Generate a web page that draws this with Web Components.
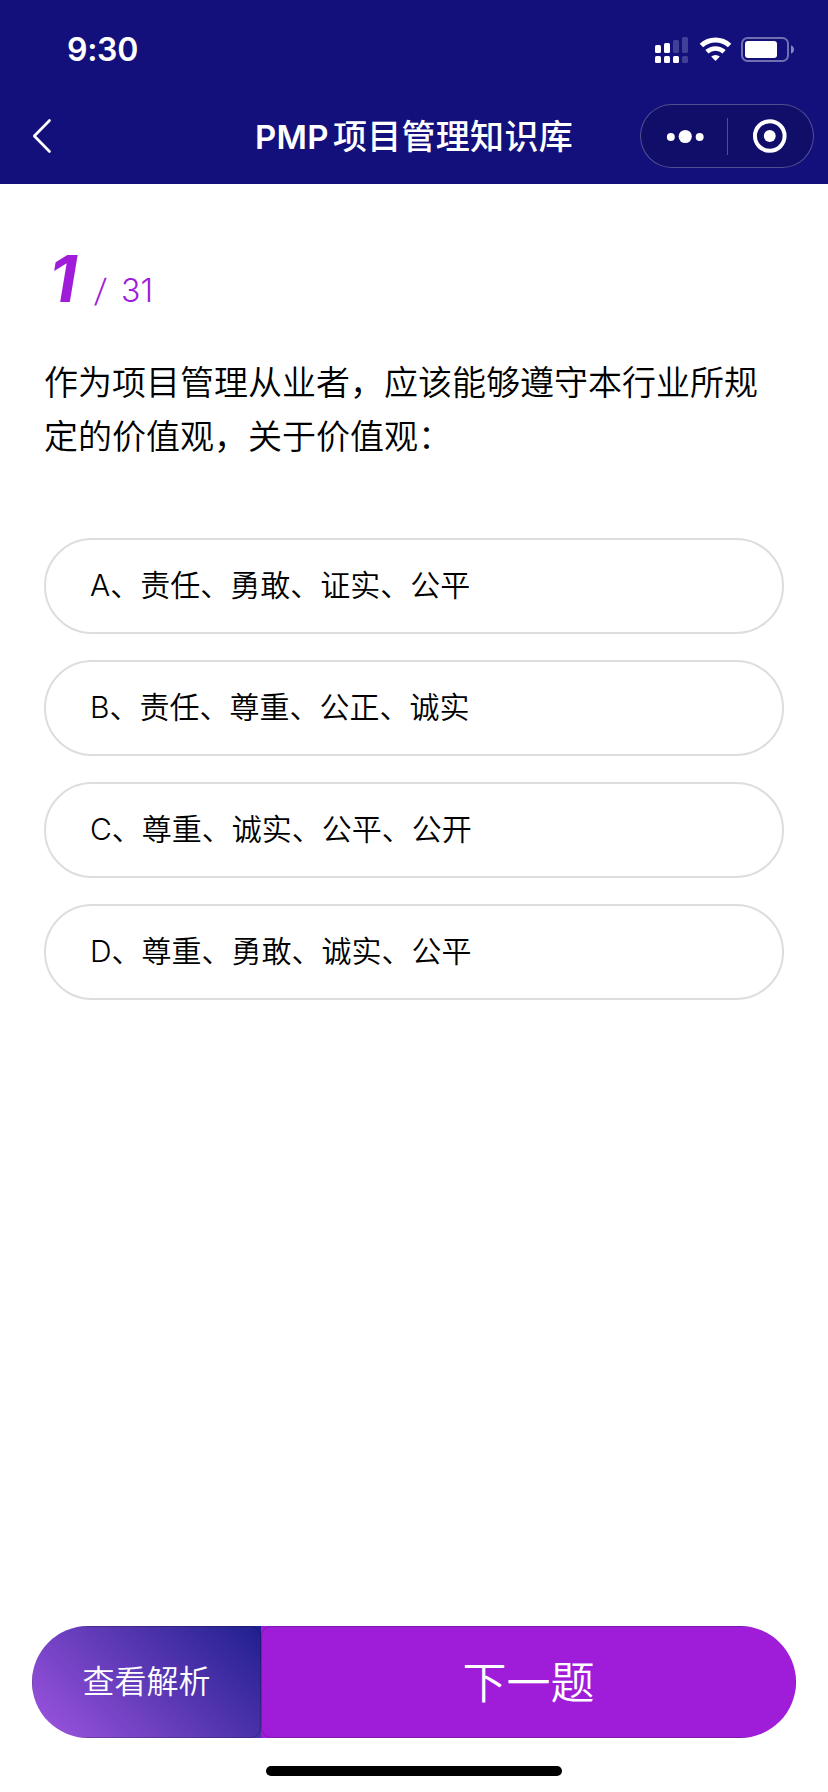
<!DOCTYPE html>
<html lang="zh-CN">
<head>
<meta charset="utf-8">
<meta name="viewport" content="width=device-width, initial-scale=1">
<title>PMP项目管理知识库</title>
<style>
  html, body { margin: 0; height: 100%; }
  body {
    background: #fff;
    color: #000;
    font-family: Inter, "Noto Sans CJK SC", sans-serif;
  }
</style>
</head>
<body>
<quiz-app>
  <status-bar slot="header" time="9:30"></status-bar>
  <nav-bar slot="header"><span>PMP</span>项目管理知识库</nav-bar>
  <question-counter current="1" total="31"></question-counter>
  <question-text>作为项目管理从业者，应该能够遵守本行业所规定的价值观，关于价值观：</question-text>
  <answer-list>
    <answer-option>A、责任、勇敢、证实、公平</answer-option>
    <answer-option>B、责任、尊重、公正、诚实</answer-option>
    <answer-option>C、尊重、诚实、公平、公开</answer-option>
    <answer-option>D、尊重、勇敢、诚实、公平</answer-option>
  </answer-list>
  <action-bar slot="footer">
    <action-button variant="analysis">查看解析</action-button>
    <action-button variant="next">下一题</action-button>
  </action-bar>
</quiz-app>

<script>
class QuizApp extends HTMLElement {
  connectedCallback() {
    this.attachShadow({ mode: 'open' });
    this.shadowRoot.innerHTML = `
      <style>
        :host {
          display: flex;
          flex-direction: column;
          height: 1792px;
        }
        header {
          height: 184px;
          background: #13107c;
          color: #fff;
        }
        main {
          flex: 1;
          padding: 55px 44px 0;
        }
        .indicator {
          width: 296px;
          height: 10px;
          margin: 28px auto 16px;
          border-radius: 5px;
          background: #000;
        }
      </style>
      <header><slot name="header"></slot></header>
      <main><slot></slot></main>
      <footer>
        <slot name="footer"></slot>
        <div class="indicator"></div>
      </footer>
    `;
  }
}

class StatusBar extends HTMLElement {
  connectedCallback() {
    this.attachShadow({ mode: 'open' });
    this.shadowRoot.innerHTML = `
      <style>
        :host {
          display: flex;
          justify-content: space-between;
          height: 88px;
          box-sizing: border-box;
          padding: 30px 33px 0 67px;
        }
        .time {
          font-size: 32px;
          font-weight: 600;
          line-height: 40px;
          letter-spacing: -.3px;
        }
        svg { display: block; margin-top: 5px; }
      </style>
      <div class="time">${this.getAttribute('time')}</div>
      <svg width="142" height="30" viewBox="653 35 142 30" fill="#fff">
        <rect x="655" y="45" width="6" height="8" rx="1.5"/>
        <rect x="664" y="43" width="6" height="10" rx="1.5"/>
        <rect x="673" y="40" width="6" height="13" rx="1.5" opacity=".2"/>
        <rect x="682" y="37" width="6" height="16" rx="1.5" opacity=".2"/>
        <rect x="655" y="56" width="6" height="7" rx="1.5"/>
        <rect x="664" y="56" width="6" height="7" rx="1.5"/>
        <rect x="673" y="56" width="6" height="7" rx="1.5"/>
        <rect x="682" y="56" width="6" height="7" rx="1.5" opacity=".2"/>
        <path d="M701.4 45.5a20.6 20.6 0 0 1 28.2 0" fill="none" stroke="#fff" stroke-width="5"/>
        <path d="M706.9 51.8a12.8 12.8 0 0 1 17.2 0" fill="none" stroke="#fff" stroke-width="4.6"/>
        <path d="M711.2 56.6a6.5 6.5 0 0 1 8.6 0L715.5 61z"/>
        <rect x="742" y="38" width="46" height="23" rx="5.5" fill="none" stroke="#fff" stroke-width="2" opacity=".4"/>
        <rect x="745" y="41" width="32" height="17" rx="3"/>
        <path d="M791 45.3c4 1.4 4 7 0 8.4z" opacity=".5"/>
      </svg>
    `;
  }
}

class NavBar extends HTMLElement {
  connectedCallback() {
    this.attachShadow({ mode: 'open' });
    this.shadowRoot.innerHTML = `
      <style>
        :host {
          display: grid;
          grid-template-columns: 188px 1fr 188px;
          align-items: center;
          height: 96px;
        }
        .back { display: block; margin-left: 29px; }
        .title {
          padding-top: 1px;
          text-align: center;
          font-size: 34px;
          font-weight: 500;
          letter-spacing: .3px;
          line-height: 48px;
          white-space: nowrap;
        }
        ::slotted(span) {
          margin-right: 4px;
          font-size: 33px;
          font-weight: 570;
        }
        .capsule {
          display: flex;
          align-items: center;
          width: 174px;
          height: 64px;
          box-sizing: border-box;
          border: 1px solid rgba(255, 255, 255, .27);
          border-radius: 32px;
          background: #110e69;
        }
        .capsule svg { display: block; width: 86px; height: 62px; }
        .divider {
          width: 1px;
          height: 37px;
          background: rgba(255, 255, 255, .27);
        }
      </style>
      <svg class="back" width="24" height="36" viewBox="0 0 24 36">
        <path d="M20.5 2.5L5.3 18 20.5 33.5" fill="none" stroke="#fff" stroke-width="2.7" stroke-linecap="round" stroke-linejoin="round"/>
      </svg>
      <div class="title"><slot></slot></div>
      <div class="capsule">
        <svg viewBox="0 0 86 62" fill="#fff">
          <circle cx="30" cy="32" r="4"/>
          <circle cx="44.5" cy="31.5" r="6.6"/>
          <circle cx="59" cy="32" r="4"/>
        </svg>
        <div class="divider"></div>
        <svg viewBox="0 0 86 62" fill="#fff">
          <circle cx="42" cy="31" r="14.9" fill="none" stroke="#fff" stroke-width="4"/>
          <circle cx="42" cy="31" r="6"/>
        </svg>
      </div>
    `;
  }
}

class QuestionCounter extends HTMLElement {
  connectedCallback() {
    this.attachShadow({ mode: 'open' });
    this.shadowRoot.innerHTML = `
      <style>
        :host {
          display: flex;
          align-items: baseline;
          height: 115px;
          color: #9f1dd9;
          line-height: 80px;
        }
        .current {
          width: 46px;
          padding-left: 5px;
          font-size: 65px;
          font-weight: 700;
          font-style: italic;
        }
        .slash, .total {
          font-size: 32px;
          font-weight: 300;
        }
        .slash {
          width: 26px;
          transform: skewX(-6deg);
        }
      </style>
      <span class="current">${this.getAttribute('current')}</span>
      <span class="slash">/</span>
      <span class="total">${this.getAttribute('total')}</span>
    `;
  }
}

class QuestionText extends HTMLElement {
  connectedCallback() {
    this.attachShadow({ mode: 'open' });
    this.shadowRoot.innerHTML = `
      <style>
        :host {
          display: block;
          font-family: "Noto Sans CJK SC", sans-serif;
          font-size: 34px;
          font-weight: 350;
          line-height: 54px;
        }
      </style>
      <slot></slot>
    `;
  }
}

class AnswerList extends HTMLElement {
  connectedCallback() {
    this.attachShadow({ mode: 'open' });
    this.shadowRoot.innerHTML = `
      <style>
        :host {
          display: flex;
          flex-direction: column;
          gap: 26px;
          margin-top: 76px;
        }
      </style>
      <slot></slot>
    `;
  }
}

class AnswerOption extends HTMLElement {
  connectedCallback() {
    this.attachShadow({ mode: 'open' });
    this.shadowRoot.innerHTML = `
      <style>
        :host {
          display: flex;
          align-items: center;
          height: 96px;
          box-sizing: border-box;
          padding: 0 44px 2px;
          border: 2px solid #ddd;
          border-radius: 48px;
          font-size: 30px;
          font-weight: 350;
          line-height: 40px;
        }
      </style>
      <slot></slot>
    `;
  }
}

class ActionBar extends HTMLElement {
  connectedCallback() {
    this.attachShadow({ mode: 'open' });
    this.shadowRoot.innerHTML = `
      <style>
        :host {
          display: grid;
          grid-template-columns: 229px 1fr;
          height: 112px;
          margin: 0 32px;
          border-radius: 56px;
          overflow: hidden;
        }
      </style>
      <slot></slot>
    `;
  }
}

class ActionButton extends HTMLElement {
  connectedCallback() {
    this.attachShadow({ mode: 'open' });
    this.shadowRoot.innerHTML = `
      <style>
        :host {
          display: flex;
          position: relative;
          align-items: center;
          justify-content: center;
          padding-bottom: 4px;
          color: #fff;
          background: #9f1dd9;
          font-size: 44px;
          font-weight: 350;
        }
        :host([variant="analysis"]) {
          padding-bottom: 6px;
          background: linear-gradient(45deg, #9f55e0, #1f1f8f);
          font-size: 32px;
        }
        /* hairline outline over the fill */
        :host::after {
          content: "";
          position: absolute;
          inset: 0;
          border: 1px solid rgba(0, 0, 0, .2);
          border-radius: 10px;
        }
      </style>
      <slot></slot>
    `;
  }
}

customElements.define('quiz-app', QuizApp);
customElements.define('status-bar', StatusBar);
customElements.define('nav-bar', NavBar);
customElements.define('question-counter', QuestionCounter);
customElements.define('question-text', QuestionText);
customElements.define('answer-list', AnswerList);
customElements.define('answer-option', AnswerOption);
customElements.define('action-bar', ActionBar);
customElements.define('action-button', ActionButton);
</script>
</body>
</html>
